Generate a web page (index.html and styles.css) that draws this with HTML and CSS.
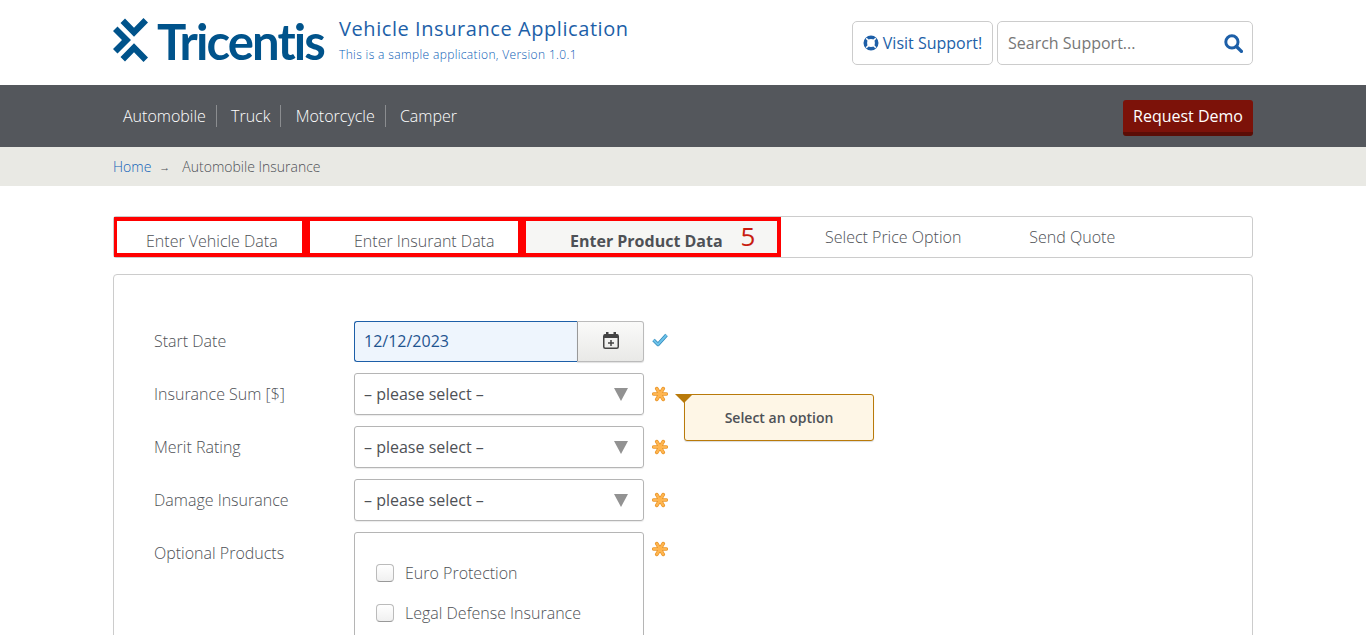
FILE: index.html
```html
<!DOCTYPE html>
<html lang="en">
<head>
    <meta charset="UTF-8">
    <meta name="viewport" content="width=device-width, initial-scale=1.0">
    <title>Vehicle Insurance Application</title>
    <link rel="stylesheet" href="styles.css">
</head>
<body>
    <svg class="sprites" width="0" height="0" aria-hidden="true">
        <symbol id="icon-required" viewBox="0 0 16 16">
            <path d="M1.800 8H14.200M4.800 2.600L11.200 13.400M11.200 2.600L4.800 13.400" stroke="#e8952a" stroke-width="3.700" stroke-linecap="round"/>
            <path d="M1.800 8H14.200M4.800 2.600L11.200 13.400M11.200 2.600L4.800 13.400" stroke="#ffb54f" stroke-width="2.200" stroke-linecap="round"/>
        </symbol>
    </svg>

    <header class="top container">
        <div class="brand">
            <svg class="logo-mark" viewBox="0 0 36 44" aria-hidden="true">
                <path fill="#00538b" d="M12 0.500L21 9.800L30.500 0L35 4.500L21 18.700L7.500 5Z"/>
                <path fill="#00538b" d="M12 43.500L21 34.200L30.500 44L35 39.500L21 25.300L7.500 39Z"/>
                <path fill="#00538b" d="M0 13L4.500 8.500L18 22L4.500 35.500L0 31L9 22Z"/>
            </svg>
            <span class="logo-word">Tricentis</span>
            <div class="app-title">
                <div class="app-name">Vehicle Insurance Application</div>
                <div class="app-version">This is a sample application, Version 1.0.1</div>
            </div>
        </div>
        <div class="tools">
            <a class="support-btn" href="#">
                <svg class="lifering" viewBox="0 0 16 16" aria-hidden="true">
                    <circle cx="8" cy="8" r="5.700" fill="none" stroke="#1d5fa8" stroke-width="3.600"/>
                    <path d="M3.200 3.200L5.600 5.600M12.800 3.200L10.400 5.600M3.200 12.800L5.600 10.400M12.800 12.800L10.400 10.400" stroke="#fff" stroke-width="1.500"/>
                </svg>
                Visit Support!
            </a>
            <div class="search-box">
                <span class="search-text">Search Support...</span>
                <svg class="search-icon" viewBox="0 0 18 18" aria-hidden="true">
                    <circle cx="7.500" cy="7.500" r="5.800" fill="none" stroke="#1d5fa8" stroke-width="2.800"/>
                    <path d="M11.800 11.800L16.500 16.500" stroke="#1d5fa8" stroke-width="3.200" stroke-linecap="round"/>
                </svg>
            </div>
        </div>
    </header>

    <nav class="main-nav">
        <div class="container nav-inner">
            <ul class="nav-links">
                <li>Automobile</li>
                <li>Truck</li>
                <li>Motorcycle</li>
                <li>Camper</li>
            </ul>
            <a class="demo-btn" href="#">Request Demo</a>
        </div>
    </nav>

    <div class="crumbs">
        <div class="container crumbs-inner">
            <a href="#">Home</a>
            <span class="crumb-arrow">&rarr;</span>
            <span>Automobile Insurance</span>
        </div>
    </div>

    <main class="container">
        <div class="steps">
            <div class="step step-first marked">Enter Vehicle Data</div>
            <div class="step step-second marked">Enter Insurant Data</div>
            <div class="step step-active marked">Enter Product Data <span class="count">5</span></div>
            <div class="step step-price">Select Price Option</div>
            <div class="step">Send Quote</div>
        </div>

        <form class="panel">
            <div class="row row-date">
                <label>Start Date</label>
                <div class="date-field">
                    <div class="date-value">12/12/2023</div>
                    <div class="date-btn">
                        <svg class="calendar" viewBox="0 0 16 17" aria-hidden="true">
                            <rect x=".75" y="2.750" width="14.500" height="13.500" rx="1.500" fill="none" stroke="#444" stroke-width="1.500"/>
                            <rect x="1" y="2.500" width="14" height="3.500" fill="#444"/>
                            <rect x="3" y="0" width="2.500" height="3.500" fill="#444"/>
                            <rect x="10.500" y="0" width="2.500" height="3.500" fill="#444"/>
                            <path d="M8 8V14M5 11H11" stroke="#444" stroke-width="1.500"/>
                        </svg>
                    </div>
                </div>
                <svg class="mark mark-ok" viewBox="0 0 16 16" aria-hidden="true">
                    <path d="M1.500 8L6 12.500L14.500 3" fill="none" stroke="#2f86b8" stroke-width="3.400" stroke-linejoin="round"/>
                    <path d="M1.500 8L6 12.500L14.500 3" fill="none" stroke="#6dc3ea" stroke-width="2"/>
                </svg>
            </div>

            <div class="row">
                <label>Insurance Sum [$]</label>
                <div class="select-box">&ndash; please select &ndash;<span class="caret"></span></div>
                <svg class="mark"><use href="#icon-required"/></svg>
                <div class="tip">Select an option</div>
            </div>

            <div class="row">
                <label>Merit Rating</label>
                <div class="select-box">&ndash; please select &ndash;<span class="caret"></span></div>
                <svg class="mark"><use href="#icon-required"/></svg>
            </div>

            <div class="row">
                <label>Damage Insurance</label>
                <div class="select-box">&ndash; please select &ndash;<span class="caret"></span></div>
                <svg class="mark"><use href="#icon-required"/></svg>
            </div>

            <div class="row row-options">
                <label>Optional Products</label>
                <div class="options-box">
                    <div class="option"><span class="check"></span>Euro Protection</div>
                    <div class="option"><span class="check"></span>Legal Defense Insurance</div>
                </div>
                <svg class="mark"><use href="#icon-required"/></svg>
            </div>
        </form>
    </main>
</body>
</html>
```

FILE: styles.css
```css
* {
    box-sizing: border-box;
}
html, body {
    height: 100%;
    overflow: hidden;
}
body {
    margin: 0;
    background-color: #fff;
    color: #4e5156;
    font-family: "Open Sans", sans-serif;
    font-size: 16px;
}
a {
    color: #1d5fa8;
    text-decoration: none;
}
.sprites {
    display: block;
    height: 0;
}
.container {
    width: 1140px;
    margin: 0 auto;
}

/* header */
.top {
    height: 85px;
    display: flex;
    justify-content: space-between;
}
.brand {
    display: flex;
    align-items: flex-start;
}
.logo-mark {
    width: 36px;
    height: 44px;
    margin-top: 18px;
}
.logo-word {
    margin: 8px 0 0 8px;
    width: 182px;
    font-family: Lato, sans-serif;
    font-size: 49px;
    font-weight: 700;
    line-height: 66px;
    letter-spacing: -1.9px;
    color: #00538b;
}
.app-title {
    margin-top: 15px;
}
.app-name {
    font-size: 20px;
    line-height: 28px;
    letter-spacing: 0.57px;
    color: #1d5fa8;
}
.app-version {
    margin-top: 3px;
    font-size: 12px;
    font-weight: 300;
    line-height: 18px;
    letter-spacing: 0.36px;
    color: #0a5cb5;
}
.tools {
    display: flex;
    gap: 4px;
    padding-top: 21px;
}
.support-btn {
    width: 141px;
    height: 44px;
    display: flex;
    align-items: center;
    justify-content: center;
    gap: 4px;
    border: 1px solid #ccc;
    border-radius: 5px;
}
.lifering {
    width: 16px;
    height: 16px;
}
.search-box {
    width: 256px;
    height: 44px;
    display: flex;
    align-items: center;
    justify-content: space-between;
    padding: 0 9px 0 10px;
    border: 1px solid #ccc;
    border-radius: 5px;
    color: #777;
}
.search-icon {
    width: 19px;
    height: 19px;
}

/* nav bar */
.main-nav {
    height: 62px;
    background-color: #54575c;
    color: #fff;
}
.nav-inner {
    height: 100%;
    display: flex;
    align-items: center;
    justify-content: space-between;
    padding-left: 10px;
}
.nav-links {
    display: flex;
    list-style: none;
    margin: 0;
    padding: 0;
    font-weight: 300;
}
.nav-links li {
    line-height: 22px;
    padding-right: 10px;
    margin-right: 14.2px;
    border-right: 1px solid #8b8d90;
}
.nav-links li:last-child {
    border-right: none;
}
.demo-btn {
    width: 130px;
    height: 36px;
    margin-top: 4px;
    display: flex;
    align-items: center;
    justify-content: center;
    background-color: #7c1209;
    border-bottom: 4px solid #5b0d06;
    border-radius: 3px;
    color: #fff;
}

/* breadcrumb */
.crumbs {
    height: 39px;
    background-color: #e9e9e4;
    font-size: 14px;
    font-weight: 300;
}
.crumbs-inner {
    height: 100%;
    display: flex;
    align-items: center;
}
.crumbs-inner a {
    color: #0f62b8;
}
.crumb-arrow {
    width: 31px;
    padding-left: 8px;
    font-size: 11px;
    font-weight: 400;
}

/* steps */
.steps {
    height: 42px;
    margin-top: 30px;
    display: flex;
    border: 1px solid #ccc;
    border-radius: 3px;
    font-weight: 300;
}
.step {
    display: flex;
    align-items: center;
    padding-left: 44px;
    white-space: nowrap;
}
.marked {
    padding-top: 8px;
    padding-left: 44px;
    border: 4px solid #f00;
}
.step-first {
    width: 192px;
    padding-left: 29px;
    border-left-width: 3px;
}
.step-second {
    width: 216px;
}
.step-active {
    width: 259px;
    background-color: #f6f6f4;
    font-weight: 700;
}
.count {
    margin-left: 18px;
    margin-top: -10px;
    font-size: 26px;
    font-weight: 400;
    color: #c81c10;
}
.step-price {
    padding-right: 24px;
}

/* form */
.panel {
    margin-top: 16px;
    padding: 46px 40px 40px;
    border: 1px solid #ccc;
    border-radius: 4px;
    display: flex;
    flex-direction: column;
    gap: 11px;
}
.row {
    position: relative;
    display: grid;
    grid-template-columns: 200px 290px 16px;
    align-items: center;
}
.row label {
    font-weight: 300;
}
.mark {
    width: 16px;
    height: 16px;
    margin-left: 8px;
}
.row-date {
    height: 41px;
}
.row-date label {
    margin-bottom: 2px;
}
.mark-ok {
    margin-top: -3px;
}
.date-field {
    height: 41px;
    display: flex;
}
.date-value {
    width: 223px;
    padding: 0 9px;
    line-height: 39px;
    background-color: #eef5fd;
    border: 1px solid #1d5fa8;
    border-right: none;
    border-radius: 3px 0 0 3px;
    color: #1f5490;
}
.date-btn {
    width: 67px;
    display: flex;
    align-items: center;
    justify-content: center;
    padding: 0 0 2px 0;
    background: linear-gradient(#fafaf9, #e9e9e7);
    border: 1px solid #bbb;
    border-left-color: #999;
    border-radius: 0 3px 3px 0;
    box-shadow: 0 1px 1px rgba(0, 0, 0, 0.12);
}
.calendar {
    width: 16px;
    height: 17px;
}
.select-box {
    position: relative;
    height: 42px;
    padding: 0 9px;
    line-height: 40px;
    border: 1px solid #b5b5b5;
    border-radius: 3px;
    box-shadow: 0 1px 1px rgba(0, 0, 0, 0.08);
}
.caret {
    position: absolute;
    top: 14px;
    right: 15px;
    border-top: 13px solid #929292;
    border-left: 7px solid transparent;
    border-right: 7px solid transparent;
}
.tip {
    position: absolute;
    left: 530px;
    top: 21px;
    width: 190px;
    height: 47px;
    background-color: #fef6e6;
    border: 1px solid #b97a0a;
    border-radius: 3px;
    box-shadow: 0 1px 1px rgba(0, 0, 0, 0.15);
    font-size: 14px;
    font-weight: 600;
    line-height: 46px;
    text-align: center;
}
.tip::before {
    content: "";
    position: absolute;
    left: -10px;
    top: -1px;
    border-top: 9px solid #b97a0a;
    border-left: 9px solid transparent;
    border-right: 9px solid transparent;
}
.row-options {
    align-items: start;
}
.row-options label {
    margin-top: 10px;
}
.row-options .mark {
    margin-top: 9px;
}
.options-box {
    height: 150px;
    padding: 20px 21px 0;
    border: 1px solid #b5b5b5;
    border-radius: 3px;
}
.option {
    height: 40px;
    display: flex;
    align-items: center;
    gap: 11px;
    font-weight: 300;
}
.check {
    width: 18px;
    height: 18px;
    background: linear-gradient(#fff, #f0f0f0);
    border: 1px solid #bbb;
    border-bottom-color: #999;
    border-radius: 4px;
}
```
